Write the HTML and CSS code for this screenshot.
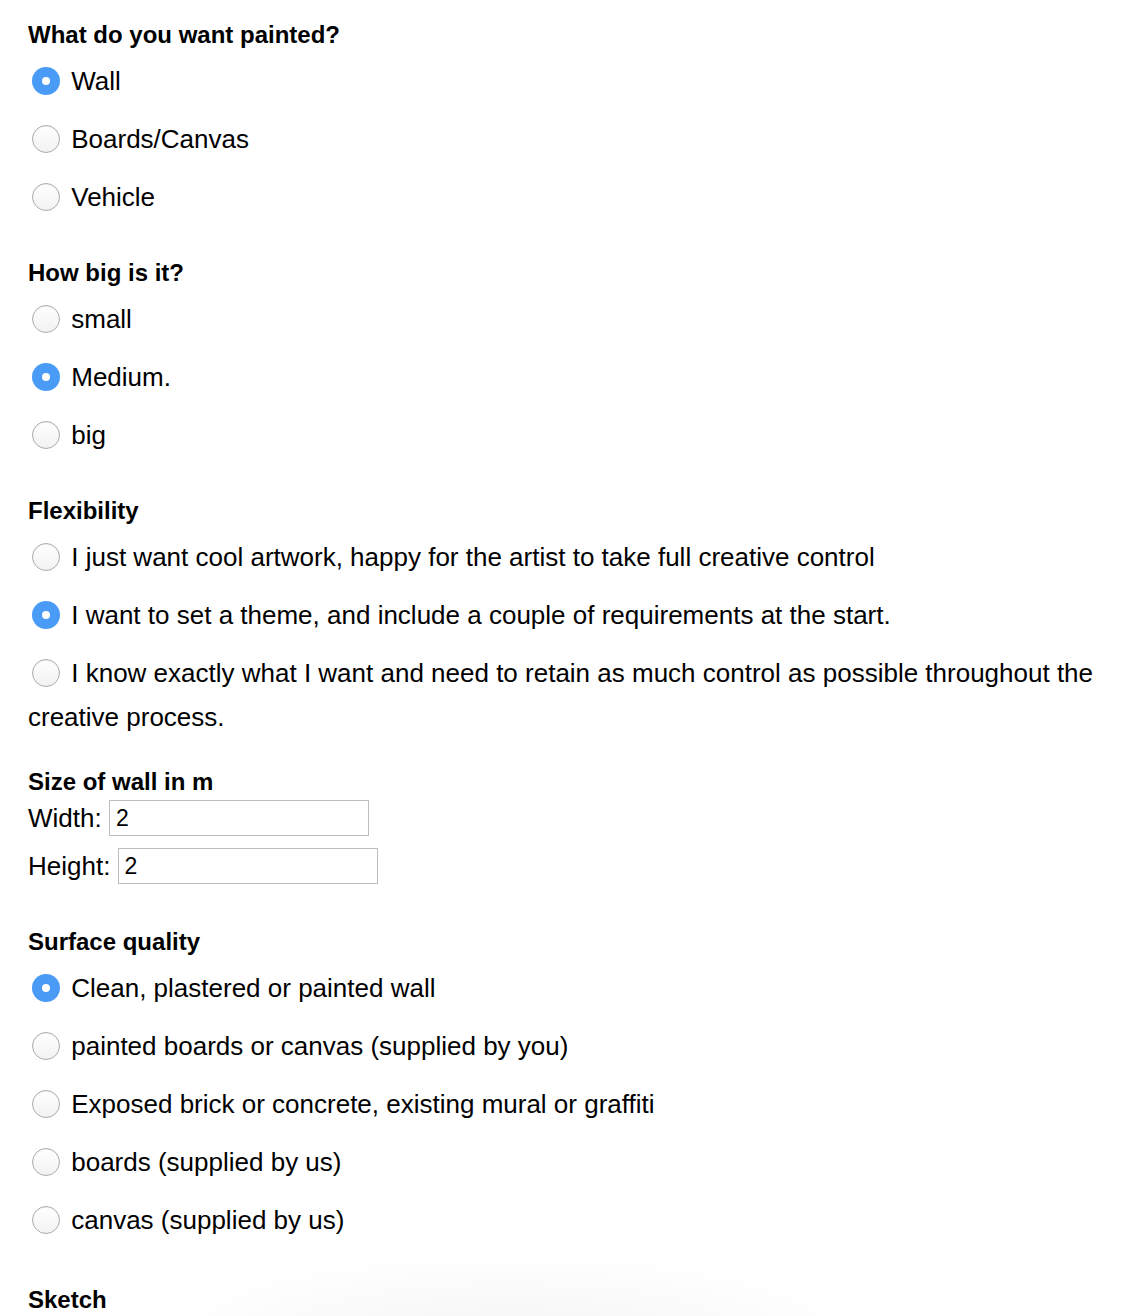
FILE: index.html
```html
<!DOCTYPE html>
<html lang="en">
<head>
<meta charset="utf-8">
<title>Mural request</title>
<link rel="stylesheet" href="styles.css">
</head>
<body>
<form class="form">
  <section class="group">
    <h3 class="title">What do you want painted?</h3>
    <label class="option"><input type="radio" name="what" class="radio" checked> Wall</label>
    <label class="option"><input type="radio" name="what" class="radio"> Boards/Canvas</label>
    <label class="option"><input type="radio" name="what" class="radio"> Vehicle</label>
  </section>
  <section class="group">
    <h3 class="title">How big is it?</h3>
    <label class="option"><input type="radio" name="size" class="radio"> small</label>
    <label class="option"><input type="radio" name="size" class="radio" checked> Medium.</label>
    <label class="option"><input type="radio" name="size" class="radio"> big</label>
  </section>
  <section class="group group-tight">
    <h3 class="title">Flexibility</h3>
    <label class="option"><input type="radio" name="flex" class="radio"> I just want cool artwork, happy for the artist to take full creative control</label>
    <label class="option"><input type="radio" name="flex" class="radio" checked> I want to set a theme, and include a couple of requirements at the start.</label>
    <label class="option"><input type="radio" name="flex" class="radio"> I know exactly what I want and need to retain as much control as possible throughout the creative process.</label>
  </section>
  <section class="group group-dims">
    <h3 class="title title-dims">Size of wall in m</h3>
    <div class="dim">Width: <input type="text" class="field" value="2"></div>
    <div class="dim">Height: <input type="text" class="field" value="2"></div>
  </section>
  <section class="group group-last">
    <h3 class="title">Surface quality</h3>
    <label class="option"><input type="radio" name="surface" class="radio" checked> Clean, plastered or painted wall</label>
    <label class="option"><input type="radio" name="surface" class="radio"> painted boards or canvas (supplied by you)</label>
    <label class="option"><input type="radio" name="surface" class="radio"> Exposed brick or concrete, existing mural or graffiti</label>
    <label class="option"><input type="radio" name="surface" class="radio"> boards (supplied by us)</label>
    <label class="option"><input type="radio" name="surface" class="radio"> canvas (supplied by us)</label>
  </section>
  <section class="sketch">
    <h3 class="title">Sketch</h3>
  </section>
</form>
</body>
</html>
```
FILE: styles.css
```css
html, body {
  margin: 0;
  padding: 0;
  background: #ffffff;
}

body {
  font-family: "Liberation Sans", Arial, Helvetica, sans-serif;
  color: #000000;
  overflow: hidden;
  height: 1316px;
}

.form {
  padding: 20px 28px 0 28px;
  width: 1072px;
}

.group {
  display: flow-root;
  margin-bottom: 25px;
}

.group-tight {
  margin-bottom: 14px;
}

.group-dims {
  margin-bottom: 43px;
}

.group-last {
  margin-bottom: 29px;
}

.title {
  margin: 0 0 9px 0;
  font-size: 24px;
  font-weight: bold;
  line-height: 30px;
}

.title-dims {
  margin-bottom: 3px;
}

.option {
  display: block;
  font-size: 26px;
  line-height: 44px;
  margin-bottom: 14px;
}

.radio {
  -webkit-appearance: none;
  appearance: none;
  box-sizing: border-box;
  width: 28px;
  height: 28px;
  margin: 0 4px 0 4px;
  border-radius: 50%;
  border: 1px solid #acacac;
  background: linear-gradient(#ffffff, #f2f2f2);
  vertical-align: -5px;
  position: relative;
  box-shadow: inset 0 1px 1px rgba(0, 0, 0, 0.05);
}

.radio:checked {
  border: none;
  background: #4a9bf6;
  box-shadow: none;
}

.radio:checked::after {
  content: "";
  position: absolute;
  left: 10px;
  top: 10px;
  width: 8px;
  height: 8px;
  border-radius: 50%;
  background: #ffffff;
}

.dim {
  font-size: 26px;
  line-height: 36px;
  margin-bottom: 12px;
  display: flex;
  align-items: center;
  white-space: pre;
}

.dim:last-child {
  margin-bottom: 0;
}

.field {
  box-sizing: border-box;
  width: 260px;
  height: 36px;
  border: 1px solid #bdbdbd;
  padding: 0 6px;
  margin: 0;
  font-family: "Liberation Sans", Arial, Helvetica, sans-serif;
  font-size: 23px;
  color: #000000;
  background: #ffffff;
  outline: none;
}

.sketch {
  background: radial-gradient(ellipse 370px 85px at 510px 80px, rgba(0, 0, 0, 0.04), rgba(0, 0, 0, 0) 100%);
  margin-left: -28px;
  padding-left: 28px;
  margin-top: -30px;
  padding-top: 30px;
  height: 80px;
}
```
